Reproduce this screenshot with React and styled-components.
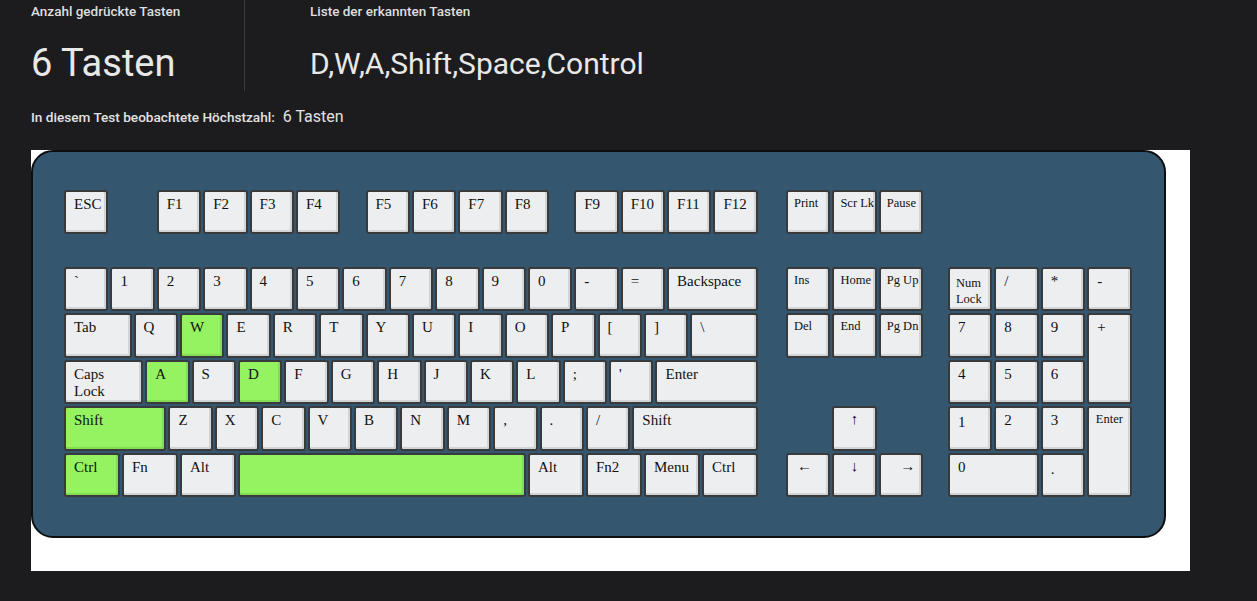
import React from 'react';
import styled, { createGlobalStyle } from 'styled-components';

const U = 46.4;
const ROWS = `${U}px 30.6px repeat(5, ${U}px)`;

const pressed = ['D', 'W', 'A', 'Shift', 'Space', 'Control'];
const active = new Set(['W', 'A', 'D', 'ShiftL', 'CtrlL', 'Space']);

const fRow = [
  ['ESC', 1], [null, 1], ['F1', 1], ['F2', 1], ['F3', 1], ['F4', 1], [null, 0.5],
  ['F5', 1], ['F6', 1], ['F7', 1], ['F8', 1], [null, 0.5],
  ['F9', 1], ['F10', 1], ['F11', 1], ['F12', 1],
];

const mainRows = [
  [['`', 1], ['1', 1], ['2', 1], ['3', 1], ['4', 1], ['5', 1], ['6', 1], ['7', 1], ['8', 1], ['9', 1], ['0', 1], ['-', 1], ['=', 1], ['Backspace', 2]],
  [['Tab', 1.5], ['Q', 1], ['W', 1], ['E', 1], ['R', 1], ['T', 1], ['Y', 1], ['U', 1], ['I', 1], ['O', 1], ['P', 1], ['[', 1], [']', 1], ['\\', 1.5]],
  [['Caps Lock', 1.75], ['A', 1], ['S', 1], ['D', 1], ['F', 1], ['G', 1], ['H', 1], ['J', 1], ['K', 1], ['L', 1], [';', 1], ["'", 1], ['Enter', 2.25]],
  [['Shift', 2.25, 'ShiftL'], ['Z', 1], ['X', 1], ['C', 1], ['V', 1], ['B', 1], ['N', 1], ['M', 1], [',', 1], ['.', 1], ['/', 1], ['Shift', 2.75, 'ShiftR']],
  [['Ctrl', 1.25, 'CtrlL'], ['Fn', 1.25], ['Alt', 1.25], ['', 6.25, 'Space'], ['Alt', 1.25], ['Fn2', 1.25], ['Menu', 1.25], ['Ctrl', 1.25, 'CtrlR']],
];

const navKeys = [
  { label: 'Print', col: '1', row: '1', small: true },
  { label: 'Scr Lk', col: '2', row: '1', small: true },
  { label: 'Pause', col: '3', row: '1', small: true },
  { label: 'Ins', col: '1', row: '3', small: true },
  { label: 'Home', col: '2', row: '3', small: true },
  { label: 'Pg Up', col: '3', row: '3', small: true },
  { label: 'Del', col: '1', row: '4', small: true },
  { label: 'End', col: '2', row: '4', small: true },
  { label: 'Pg Dn', col: '3', row: '4', small: true },
  { label: '↑', col: '2', row: '6', align: 'center', arrow: true },
  { label: '←', col: '1', row: '7', align: 'left', arrow: true },
  { label: '↓', col: '2', row: '7', align: 'center', arrow: true },
  { label: '→', col: '3', row: '7', align: 'right', arrow: true },
];

const numKeys = [
  { label: 'Num Lock', col: '1', row: '3', small: true, lower: true },
  { label: '/', col: '2', row: '3' },
  { label: '*', col: '3', row: '3' },
  { label: '-', col: '4', row: '3' },
  { label: '7', col: '1', row: '4' },
  { label: '8', col: '2', row: '4' },
  { label: '9', col: '3', row: '4' },
  { label: '+', col: '4', row: '4 / span 2' },
  { label: '4', col: '1', row: '5' },
  { label: '5', col: '2', row: '5' },
  { label: '6', col: '3', row: '5' },
  { label: '1', col: '1', row: '6', lower: true },
  { label: '2', col: '2', row: '6' },
  { label: '3', col: '3', row: '6' },
  { label: 'Enter', col: '4', row: '6 / span 2', small: true, align: 'center' },
  { label: '0', col: '1 / span 2', row: '7' },
  { label: '.', col: '3', row: '7', lower: true },
];

const twoLines = (label) => {
  const parts = label.split(' ');
  return (
    <>
      {parts[0]}
      <br />
      {parts[1]}
    </>
  );
};

const App = () => {
  return (
    <>
      <GlobalStyle />
      <Page>
        <Stats>
          <StatCol>
            <StatLabel>Anzahl gedrückte Tasten</StatLabel>
            <StatValue>6 Tasten</StatValue>
          </StatCol>
          <StatCol $wide>
            <StatLabel>Liste der erkannten Tasten</StatLabel>
            <StatValue $list>{pressed.join(',')}</StatValue>
          </StatCol>
        </Stats>
        <MaxLine>
          In diesem Test beobachtete Höchstzahl:
          <MaxValue>6 Tasten</MaxValue>
        </MaxLine>
        <Stage>
          <Board>
            <MainBlock>
              <KeyRow>
                {fRow.map(([label, w], idx) =>
                  label ? (
                    <Key key={label} $w={w}>{label}</Key>
                  ) : (
                    <Spacer key={idx} $w={w} />
                  )
                )}
              </KeyRow>
              {mainRows.map((row, r) => (
                <KeyRow key={r} $row={r + 3}>
                  {row.map(([label, w, id]) => (
                    <Key key={id || label} $w={w} $on={active.has(id || label)}>
                      {label === 'Caps Lock' ? twoLines(label) : label}
                    </Key>
                  ))}
                </KeyRow>
              ))}
            </MainBlock>
            <NavBlock>
              {navKeys.map((k) => (
                <Key
                  key={k.label}
                  $col={k.col}
                  $row={k.row}
                  $small={k.small}
                  $align={k.align}
                  $arrow={k.arrow}
                >
                  {k.label}
                </Key>
              ))}
            </NavBlock>
            <NumBlock>
              {numKeys.map((k) => (
                <Key
                  key={k.label}
                  $col={k.col}
                  $row={k.row}
                  $small={k.small}
                  $align={k.align}
                  $lower={k.lower}
                >
                  {k.label === 'Num Lock' ? twoLines(k.label) : k.label}
                </Key>
              ))}
            </NumBlock>
          </Board>
        </Stage>
      </Page>
    </>
  );
};

const GlobalStyle = createGlobalStyle`
  html, body {
    margin: 0;
    padding: 0;
    background: #1c1c1e;
  }
  body {
    font-family: Roboto, "Liberation Sans", sans-serif;
    color: #e6e6e6;
  }
`;

const Page = styled.div`
  padding: 0 31px 29px;
  min-height: 601px;
  box-sizing: border-box;
`;

const Stats = styled.div`
  display: flex;
  height: 91px;
`;

const StatCol = styled.div`
  display: flex;
  flex-direction: column;
  width: ${(p) => (p.$wide ? 'auto' : '213px')};
  padding-left: ${(p) => (p.$wide ? '65px' : '0')};
  border-right: ${(p) => (p.$wide ? 'none' : '1px solid #3a3a3c')};
  padding-top: 3px;
`;

const StatLabel = styled.div`
  font-size: 13.5px;
  line-height: 17px;
  font-weight: 500;
  color: #dedede;
`;

const StatValue = styled.div`
  margin-top: ${(p) => (p.$list ? '27px' : '22px')};
  font-size: ${(p) => (p.$list ? '30px' : '38px')};
  line-height: ${(p) => (p.$list ? '34px' : '42px')};
  font-weight: 400;
  color: #e8e8e8;
`;

const MaxLine = styled.div`
  display: flex;
  align-items: baseline;
  gap: 8px;
  height: 18px;
  margin-top: 17px;
  font-size: 13.6px;
  line-height: 18px;
  font-weight: 500;
  color: #e2e2e2;
`;

const MaxValue = styled.span`
  font-size: 16px;
  font-weight: 400;
`;

const Stage = styled.div`
  margin-top: 24px;
  width: 1159px;
  height: 421px;
  background: #ffffff;
`;

const Board = styled.div`
  display: flex;
  align-items: flex-start;
  width: 1135px;
  box-sizing: border-box;
  padding: 37px 0 38px 30px;
  background: #34566f;
  border: 2px solid #0b0d0f;
  border-radius: 22px;
`;

const MainBlock = styled.div`
  display: grid;
  grid-template-rows: ${ROWS};
  width: ${15 * U}px;
`;

const NavBlock = styled.div`
  display: grid;
  grid-template-rows: ${ROWS};
  grid-template-columns: repeat(3, ${U}px);
  margin-left: 26px;
`;

const NumBlock = styled.div`
  display: grid;
  grid-template-rows: ${ROWS};
  grid-template-columns: repeat(4, ${U}px);
  margin-left: 22.8px;
`;

const KeyRow = styled.div`
  display: flex;
  grid-row: ${(p) => p.$row || 1};
`;

const Spacer = styled.div`
  width: ${(p) => p.$w * U}px;
`;

const keyPadding = (p) => {
  if (p.$arrow) {
    if (p.$align === 'left') return '3px 0 0 9px';
    if (p.$align === 'right') return '3px 6px 0 0';
    return '3px 0 0';
  }
  if (p.$small) return p.$lower ? '6px 6px 0' : '3px 6px 0';
  return p.$lower ? '6px 8px 0' : '4px 8px 0';
};

const Key = styled.div`
  box-sizing: border-box;
  margin: 1px;
  width: ${(p) => (p.$w ? `${p.$w * U - 2}px` : 'auto')};
  grid-column: ${(p) => p.$col || 'auto'};
  grid-row: ${(p) => p.$row || 'auto'};
  padding: ${keyPadding};
  background: ${(p) => (p.$on ? '#95f260' : '#edeef0')};
  border: 2px solid #393a3b;
  border-radius: 3px;
  box-shadow: inset -2px -2px 0 ${(p) => (p.$on ? '#84dc52' : '#d3d4d6')};
  font-family: "Liberation Serif", "Times New Roman", serif;
  font-size: ${(p) => (p.$small ? '12.5px' : '15px')};
  line-height: ${(p) => (p.$small ? '16px' : '17px')};
  text-align: ${(p) => p.$align || 'left'};
  color: #111;
  overflow: hidden;
  white-space: nowrap;
`;

export default App;
